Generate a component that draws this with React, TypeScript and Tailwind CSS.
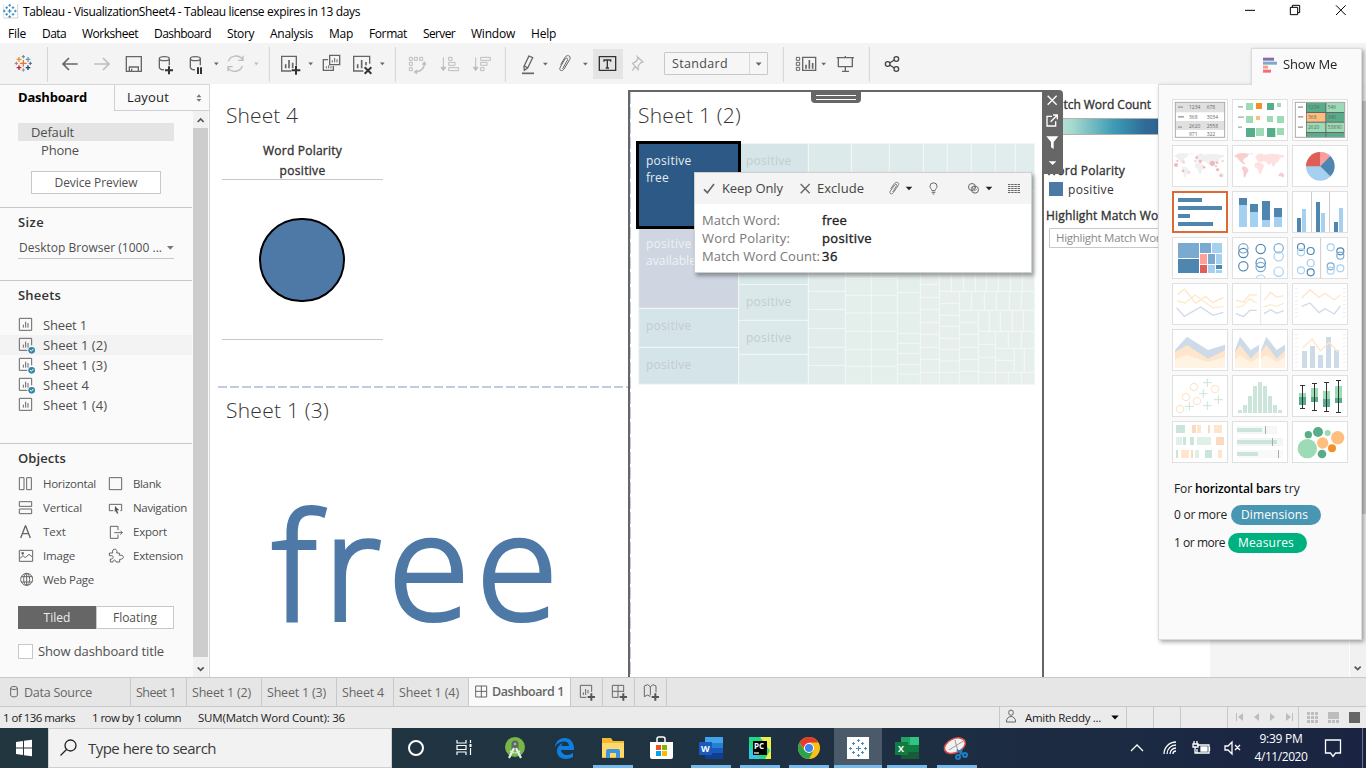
import { useLayoutEffect, useRef, type ReactNode } from "react";

/* A one-line label whose tracking is set so that it spans `w` pixels. */
function Fit({ w, className = "", children }: { w: number; className?: string; children: string }) {
  const ref = useRef<HTMLSpanElement>(null);
  useLayoutEffect(() => {
    const el = ref.current;
    if (!el) return;
    el.style.letterSpacing = "0px";
    const natural = el.getBoundingClientRect().width;
    el.style.letterSpacing = `${(w - natural) / children.length}px`;
  }, [w, children]);
  return (
    <span ref={ref} className={"inline-block shrink-0 whitespace-pre " + className}>
      {children}
    </span>
  );
}

/* Icon drawn on a grid of three units per pixel. */
function Ico({ vb, className = "", children }: { vb: string; className?: string; children?: ReactNode }) {
  const [, , w, h] = vb.split(" ").map(Number);
  return (
    <svg viewBox={vb} width={w / 3} height={h / 3} className={"block shrink-0 " + className} fill="none" stroke="#666" strokeWidth={4}>
      {children}
    </svg>
  );
}

const Caret = ({ x, y, c = "#666", s = 7 }: { x: number; y: number; c?: string; s?: number }) => (
  <path d={`M${x - s} ${y - s / 2}h${2 * s}l${-s} ${s + 1}z`} fill={c} stroke="none" />
);

const Plus = ({ x, y, s, c, w = 4 }: { x: number; y: number; s: number; c: string; w?: number }) => (
  <path d={`M${x - s} ${y}h${2 * s}M${x} ${y - s}v${2 * s}`} stroke={c} strokeWidth={w} />
);

const menus: [string, number][] = [
  ["File", 18], ["Data", 24], ["Worksheet", 56], ["Dashboard", 57], ["Story", 27], ["Analysis", 43],
  ["Map", 24], ["Format", 38], ["Server", 32], ["Window", 44], ["Help", 25],
];

function TitleBar() {
  return (
    <header className="h-[43px] bg-white text-[12px] text-black">
      <div className="flex h-[24px] items-center">
        <Ico vb="0 0 69 72">
          <path d="M10 54V14" stroke="#ccc" strokeWidth={2} />
          <path d="M12 54h41V12" stroke="#bbb" strokeWidth={2} />
          <Plus x={29} y={33} s={6} c="#2f7fb5" w={3} />
          {[[29, 16], [29, 50], [13, 33], [46, 33], [20, 23], [39, 23], [20, 43], [39, 43]].map(([x, y]) => (
            <Plus key={`${x}-${y}`} x={x} y={y} s={4} c="#3b8dc0" w={3} />
          ))}
        </Ico>
        <Fit w={337}>Tableau - VisualizationSheet4 - Tableau license expires in 13 days</Fit>
        <Ico vb="780 0 438 72" className="ml-auto">
          <path d="M855 31h30" stroke="#000" strokeWidth={3} />
          <path d="M991 22h22v22h-22zM997 22v-6h22v22h-6" stroke="#000" strokeWidth={3} />
          <path d="M1128 16l29 29M1157 16l-29 29" stroke="#000" strokeWidth={3} />
        </Ico>
      </div>
      <nav className="flex h-[19px] items-center gap-4 pl-2">
        {menus.map(([m, w]) => (
          <Fit key={m} w={w}>{m}</Fit>
        ))}
      </nav>
    </header>
  );
}

function Toolbar() {
  const lite = "#bdbdbd";
  return (
    <div className="flex h-[41px] bg-[#f4f4f4] pr-2">
      <Ico vb="0 129 144 123">
        <Plus x={70} y={190} s={10} c="#e8762b" />
        <Plus x={57} y={178} s={7} c="#e8912f" />
        <Plus x={84} y={178} s={7} c="#7099a6" />
        <Plus x={57} y={203} s={7} c="#c72035" />
        <Plus x={84} y={203} s={7} c="#1f447e" />
        <Plus x={70} y={170} s={5} c="#59879b" w={3} />
        <Plus x={70} y={210} s={5} c="#7099a6" w={3} />
        <Plus x={49} y={190} s={5} c="#c76a7c" w={3} />
        <Plus x={91} y={190} s={5} c="#5b6591" w={3} />
        <path d="M142.5 141v105" stroke="#d4d4d4" strokeWidth={3} />
      </Ico>
      <Ico vb="144 129 210 123">
        <path d="M233 192h-43M207 174l-18 18 18 18" strokeWidth={5} />
        <path d="M283 192h43M309 174l18 18-18 18" stroke={lite} strokeWidth={5} />
      </Ico>
      <Ico vb="354 129 456 123">
        <path d="M379 170h45v44h-45zM388 213v-12h27v12M395 213v-7" />
        <path d="M478 176c0-8 30-8 30 0v20M478 176c0 8 30 8 30 0M478 176v26c0 6 8 8 14 7" />
        <Plus x={507} y={211} s={12} c="#333" w={6} />
        <path d="M571 176c0-8 30-8 30 0v20M571 176c0 8 30 8 30 0M571 176v26c0 6 8 8 14 7" />
        <path d="M594 202v20M603 202v20" stroke="#333" strokeWidth={6} />
        <Caret x={649} y={191} />
        <path d="M685 184c6-18 32-22 42-6M727 198c-6 18-32 22-42 6M729 167v14h-14M684 214v-14h14" stroke={lite} />
        <Caret x={769} y={191} c={lite} />
        <path d="M808 141v105" stroke="#d4d4d4" strokeWidth={3} />
      </Ico>
      <Ico vb="810 129 378 123">
        <path d="M874 213h-29v-44h44v28" />
        <path d="M857 205v-12M867 205v-25M878 205v-17" strokeWidth={5} />
        <Plus x={888} y={211} s={13} c="#333" w={6} />
        <Caret x={932} y={191} />
        <path d="M989 166h30v28h-30zM984 179h-14v32h30v-13" />
        <path d="M997 187v-6M1004 187v-13M1011 187v-9M979 205v-6M986 205v-9M993 205v-6" strokeWidth={3} />
        <path d="M1090 213h-29v-44h48v22" />
        <path d="M1073 205v-12M1085 205v-25M1098 196v-10" strokeWidth={5} />
        <path d="M1094 202l20 19M1114 202l-20 19" stroke="#333" strokeWidth={6} />
        <Caret x={1147} y={191} />
        <path d="M1186 141v105" stroke="#d4d4d4" strokeWidth={3} />
      </Ico>
      <Ico vb="-12 -3 330 123">
        <g stroke={lite} strokeWidth={3}>
          <path d="M28 40h9v9h-9zM43 40h9v9h-9zM59 40h9v9h-9zM28 55h9v9h-9zM28 71h9v9h-9z" />
          <path d="M73 56c1 16-10 28-28 28M67 62l6-7 5 7M51 78l-7 6 7 5" strokeWidth={4} />
          <path d="M130 40v38M146 40h10v9h-10zM146 55h19v9h-19zM146 71h30v9h-30z" />
          <path d="M123 70h14l-7 10z" fill={lite} />
          <path d="M227 40v38M242 40h29v9h-29zM242 55h19v9h-19zM242 71h10v9h-10z" />
          <path d="M220 70h14l-7 10z" fill={lite} />
        </g>
        <path d="M316 9v105" stroke="#d4d4d4" strokeWidth={3} />
      </Ico>
      <Ico vb="318 -3 261 123">
        <path d="M387 36l11 5-15 31-10 7-1-12zM374 66l9 6" />
        <path d="M366 88h36" strokeWidth={5} />
        <Caret x={436} y={60} />
        <path d="M488 74l14-25c3-8-5-8-7-4l-14 24c-6 12 6 14 11 6l17-28c6-14-10-15-14-7l-13 22" strokeWidth={3} />
        <Caret x={556} y={60} />
      </Ico>
      <div className="mt-[6px] h-[30px] w-[30px] bg-[#e4e4e4]">
        <Ico vb="579 15 90 90">
          <path d="M598 38h49v41h-49z" stroke="#333" />
          <path d="M612 53v-5h20v5M622 48v24M617 72h10" stroke="#333" />
        </Ico>
      </div>
      <Ico vb="669 -3 123 123">
        <path d="M712 38l17 16-6 2-8 9-1 12-16-19 9-5 7-8zM706 66l-9 14" stroke={lite} />
      </Ico>
      <div className="mt-[9px] flex h-[23px] w-[104px] items-center rounded-[1px] border border-[#c8c8c8] bg-[#f6f6f6] pl-[7px] text-[12.5px] text-[#4a4a4a]">
        <Fit w={56} className="pt-px">Standard</Fit>
        <div className="ml-auto flex h-full w-[18px] items-center border-l border-[#d8d8d8]">
          <Ico vb="0 0 54 54"><Caret x={26} y={27} s={9} /></Ico>
        </div>
      </div>
      <Ico vb="1104 -3 456 123">
        <path d="M1150 9v105M1408 9v105" stroke="#d4d4d4" strokeWidth={3} />
        <path d="M1189 40h10v9h-10zM1189 55h10v9h-10zM1189 70h10v9h-10z" strokeWidth={3} />
        <path d="M1208 40h39v39h-39z" />
        <path d="M1218 74v-12M1228 74v-26M1238 74v-17" strokeWidth={5} />
        <Caret x={1271} y={60} />
        <path d="M1310 41h52M1315 43v25h42v-25M1336 36v5M1336 68v14M1326 82h21" />
        <g stroke="#444">
          <circle cx={1463} cy={60} r={7} /><circle cx={1489} cy={45} r={7} /><circle cx={1489} cy={75} r={7} />
          <path d="M1469 57l14-9M1469 63l14 9" />
        </g>
      </Ico>
    </div>
  );
}

const SheetIcon = ({ used }: { used: boolean }) => (
  <Ico vb="54 694 72 60">
    <path d={used ? "M82 740h-24v-36h37v21" : "M58 704h37v36h-37z"} strokeWidth={3} />
    <path d="M70 732v-9M77 732v-18M84 732v-14" strokeWidth={3} />
    {used && (
      <>
        <circle cx={95} cy={740} r={10} fill="#3485a8" stroke="none" />
        <path d="M90 739l4 4 6-7" stroke="#fff" strokeWidth={3} />
      </>
    )}
  </Ico>
);

const sheets: [string, number, boolean][] = [
  ["Sheet 1", 44, false], ["Sheet 1 (2)", 64, true], ["Sheet 1 (3)", 64, true], ["Sheet 4", 46, true], ["Sheet 1 (4)", 64, false],
];

const objects: [string, number, string, ReactNode][] = [
  ["Horizontal", 53, "54 186 72 72", <path d="M58 203h14v36h-14zM80 203h14v36h-14z" strokeWidth={3} />],
  ["Blank", 28, "324 186 72 72", <path d="M328 203h37v36h-37z" strokeWidth={3} />],
  ["Vertical", 39, "54 258 72 72", <path d="M58 275h37v14h-37zM58 297h37v14h-37z" strokeWidth={3} />],
  ["Navigation", 54, "324 258 72 72", <><path d="M340 302h-12v-19h37v19h-4" strokeWidth={3} /><path d="M345 288l13 13-7 0 4 9-4 1-4-8-3 4z" fill="#555" stroke="none" /></>],
  ["Text", 23, "54 330 72 72", <path d="M62 384l14-36h1l14 36M67 371h19" />],
  ["Export", 34, "324 330 72 72", <path d="M354 360v-11h-23v36h23v-11M343 368h24M361 362l6 6-6 6" strokeWidth={3} />],
  ["Image", 32, "54 402 72 72", <><path d="M58 421h40v33h-40zM60 445l9-8 7 6 11-10 10 8" strokeWidth={3} /><circle cx={68} cy={430} r={2} /></>],
  ["Extension", 50, "324 402 72 72", <path d="M331 456v-9c10 2 12-11 2-10h-5v-8h10c-5-15 17-16 12 0h8v7c15-4 17 13 1 12v8h-11c-1-8-9-8-9 0z" strokeWidth={3} />],
  ["Web Page", 51, "54 474 72 72", <><circle cx={80} cy={508} r={18} strokeWidth={3} /><ellipse cx={80} cy={508} rx={9} ry={18} strokeWidth={3} /><path d="M80 490v36M63 500h34M63 516h34" strokeWidth={3} /></>],
];

function SidePanel() {
  return (
    <aside className="flex w-[210px] shrink-0 flex-col border-r border-[#d6d6d6] bg-[#fafafa] text-[#4f4f4f]">
      <div className="flex h-[27px] border-t border-[#d6d6d6]">
        <div className="flex w-[114px] items-center pl-[18px] text-[13px] font-bold text-black"><Fit w={69}>Dashboard</Fit></div>
        <div className="flex flex-1 items-center border-b border-l border-[#d0d0d0] pl-3 text-[13px] text-[#222]">
          <Fit w={42} className="pt-px">Layout</Fit>
          <Ico vb="584 24 24 30" className="ml-[26px]">
            <path d="M588 37h15l-7-9zM588 42h15l-7 8z" fill="#777" stroke="none" />
          </Ico>
        </div>
      </div>
      <div className="flex min-h-0 flex-1">
        <div className="w-[193px] shrink-0 pr-px">
          <div className="h-[97px] border-b border-[#c8c8c8] pt-3 text-[13px]">
            <div className="ml-[18px] flex h-[18px] w-[156px] items-center bg-[#e4e4e4] pl-[13px]"><Fit w={43} className="pt-[2px]">Default</Fit></div>
            <div className="ml-[41px] flex h-[18px] items-center"><Fit w={38} className="pt-[2px]">Phone</Fit></div>
            <div className="mt-[12px] ml-[31px] flex h-[23px] w-[130px] items-center justify-center border border-[#c8c8c8] bg-white text-[12px]"><Fit w={83}>Device Preview</Fit></div>
          </div>
          <div className="h-[73px] border-b border-[#c8c8c8] pt-[5px] pl-[18px]">
            <div className="flex h-5 items-center text-[13px] font-semibold text-[#333]"><Fit w={26}>Size</Fit></div>
            <div className="mt-[4px] flex h-[22px] w-[156px] items-center border-b border-[#c8c8c8] pl-px text-[12px]">
              <Fit w={143}>Desktop Browser (1000 ...</Fit>
              <Ico vb="0 0 36 24" className="ml-[2px]"><Caret x={19} y={11} s={10} c="#777" /></Ico>
            </div>
          </div>
          <div className="h-[163px] border-b border-[#c8c8c8] pt-[5px]">
            <div className="flex h-5 items-center pl-[18px] text-[13px] font-semibold text-[#333]"><Fit w={43}>Sheets</Fit></div>
            <div className="mt-[9px]">
              {sheets.map(([name, w, used], i) => (
                <div key={name} className={"flex h-5 items-center pl-[18px] text-[13px] " + (i === 1 ? "bg-[#f3f3f3]" : "")}>
                  <SheetIcon used={used} />
                  <Fit w={w} className="ml-px pt-[2px]">{name}</Fit>
                </div>
              ))}
            </div>
          </div>
          <div className="pt-[4px] pl-[18px]">
            <div className="flex h-5 items-center text-[13px] font-semibold text-[#333]"><Fit w={48} className="pt-[2px]">Objects</Fit></div>
            <div className="mt-[4px] grid grid-cols-[90px_84px] text-[11.5px]">
              {objects.map(([name, w, vb, art]) => (
                <div key={name} className="flex h-6 items-center">
                  <Ico vb={vb}>{art}</Ico>
                  <Fit w={w} className="ml-px">{name}</Fit>
                </div>
              ))}
            </div>
            <div className="mt-[14px] flex h-[23px] w-[156px] text-[12px]">
              <div className="flex w-[78px] items-center justify-center bg-[#666] text-[#eee]"><Fit w={27}>Tiled</Fit></div>
              <div className="flex flex-1 items-center justify-center border border-[#c8c8c8] bg-white"><Fit w={44}>Floating</Fit></div>
            </div>
            <div className="mt-[13px] flex h-[18px] items-center text-[13px]">
              <span className="mr-[5px] h-[15px] w-[15px] border border-[#c8c8c8] bg-white" />
              <Fit w={126} className="pt-[2px]">Show dashboard title</Fit>
            </div>
          </div>
        </div>
        <div className="flex w-[15px] flex-col bg-[#f1f1f1]">
          <Ico vb="579 81 45 51"><path d="M593 114l9-9 9 9" stroke="#555" strokeWidth={5} /></Ico>
          <div className="flex-1 bg-[#cdcdcd]" />
          <Ico vb="579 741 45 60"><path d="M593 772l9 9 9-9" stroke="#555" strokeWidth={5} /></Ico>
        </div>
      </div>
    </aside>
  );
}

const cells: [number, number, number, number, string][] = [
  [25, 432, 301, 241, "#cfd6e1"], [25, 673, 301, 117, "#d5e4e9"], [25, 790, 301, 111, "#d5e4e8"],
  [326, 178, 209, 211, "#d6e6e8"], [326, 389, 209, 212, "#d8e7e9"], [326, 601, 209, 108, "#dae8e9"],
  [326, 709, 209, 102, "#dce9ea"], [326, 811, 209, 90, "#ddeaeb"],
  [535, 178, 129, 140, "#ddeaea"], [664, 178, 216, 140, "#dfebeb"], [880, 178, 334, 140, "#e1ecec"],
  [535, 318, 111, 583, "#e1eceb"], [646, 318, 225, 583, "#e4eeeb"], [871, 318, 343, 583, "#e7efed"],
];

function Treemap() {
  return (
    <svg viewBox="0 144 1260 786" width={412} height={262} preserveAspectRatio="xMinYMin slice" className="block">
      {cells.map(([x, y, w, h, f]) => <rect key={`${x}-${y}`} x={x} y={y} width={w} height={h} fill={f} />)}
      <path
        fill="none" stroke="#f4f7f7" strokeWidth={3}
        d="M26 178H1214V901H26zM26 673H326M26 790H326M326 178V901M535 178V901M326 288H535M326 389H535M326 495H535M326 601H535M326 709H535M326 811H535
        M664 178V318M778 178V318M880 178V318M952 178V318M1024 178V318M1096 178V318M1156 178V318M535 322H1214M1156 420H1214M1096 507H1214
        M646 322V901M724 322V901M802 322V901M871 322V901M928 322V901M535 622H646M535 676H646M535 733H646M535 790H646M535 844H646
        M646 583H802M646 634H802M646 687H871M646 742H802M646 796H802M646 847H802M802 625H871M802 748H871M802 778H871M802 808H871M802 842H871M802 870H871
        M871 601H928M871 640H928M871 676H928M871 715H928M871 751H928M871 790H928M871 826H928M871 865H928
        M928 622H1214M964 507V622M1000 507V622M1036 507V622M1069 507V622M1105 507V622M1141 507V622M1177 507V622
        M928 658H988M928 694H988M928 727H988M928 763H988M928 796H988M928 831H988M928 865H988M988 622V901M988 679H1214M1024 622V679M1063 622V679M1099 622V679M1138 622V679M1174 622V679
        M1045 679V901M1078 679V742M1111 679V742M1147 679V742M1180 679V742M1045 742H1214M988 715H1045M988 751H1045M988 790H1045M988 826H1045M988 862H1045
        M1096 742V901M1045 781H1096M1045 820H1096M1045 865H1214M1135 742V793M1174 742V793M1096 793H1214M1153 793V865M1183 793V865M1096 829H1153M1135 865V901M1174 865V901"
      />
      <rect x={22.5} y={175.5} width={306} height={255} fill="#2c5985" stroke="#000" strokeWidth={9} />
      <g fontSize={36} className="[font-family:'Open_Sans',sans-serif]" fill="#c3cccf">
        <g fill="#e6ecf2">
          <text x={48} y={243} textLength={136}>positive</text>
          <text x={48} y={293} textLength={68}>free</text>
        </g>
        <g fill="#eef0f4">
          <text x={48} y={492} textLength={136}>positive</text>
          <text x={48} y={542} textLength={150}>available</text>
        </g>
        <text x={348} y={243} textLength={136}>positive</text>
        <text x={348} y={666} textLength={136}>positive</text>
        <text x={348} y={774} textLength={136}>positive</text>
        <text x={48} y={738} textLength={136}>positive</text>
        <text x={48} y={855} textLength={136}>positive</text>
      </g>
    </svg>
  );
}

function MarkTooltip() {
  const rows: [string, number, string, number][] = [
    ["Match Word:", 78, "free", 25], ["Word Polarity:", 88, "positive", 50], ["Match Word Count:", 118, "36", 16],
  ];
  return (
    <div className="absolute top-[80px] left-[64px] z-20 h-[101px] w-[338px] border border-[#d0d0d0] bg-white text-[13px] text-[#444] shadow-[2px_3px_4px_rgba(0,0,0,0.35)]">
      <div className="flex h-[31px] items-center bg-[#f4f4f4]">
        <Ico vb="195 265 81 93"><path d="M222 314l10 10 20-26" strokeWidth={5} /></Ico>
        <Fit w={61}>Keep Only</Fit>
        <Ico vb="459 265 102 93"><path d="M512 298l27 28M539 298l-27 28" strokeWidth={4} /></Ico>
        <Fit w={47}>Exclude</Fit>
        <Ico vb="702 265 480 93">
          <path d="M788 322l12-19c2-5-4-6-6-2l-13 18c-5 9 5 11 9 5l15-22c5-10-8-12-12-5l-11 16" strokeWidth={2.5} />
          <Caret x={837} y={311} s={10} c="#222" />
          <path d="M906 318c-1-5-6-7-6-13a10.500 10.500 0 0 1 21 0c0 6-5 8-6 13zM905 323h11M908 328h5" strokeWidth={3} />
          <circle cx={1026} cy={307} r={10.500} strokeWidth={3} /><circle cx={1035} cy={315} r={10.500} strokeWidth={3} />
          <path d="M1022 309l9-5M1026 314l12-6M1031 319l10-5" strokeWidth={2} />
          <Caret x={1077} y={311} s={10} c="#222" />
          <path d="M1134 299.500h36M1134 305.500h36M1134 311.500h36M1134 317.500h36M1134 323.500h36" strokeWidth={3} strokeDasharray="7.500 2" />
        </Ico>
      </div>
      <div className="pt-[7px] pl-[7px]">
        {rows.map(([k, kw, v, vw]) => (
          <div key={k} className="flex h-[18px] items-center">
            <div className="w-[120px] text-[#787878]"><Fit w={kw} className="pt-[2px] align-top">{k}</Fit></div>
            <Fit w={vw} className="pt-[2px] text-[#222] [-webkit-text-stroke:0.35px_#222]">{v}</Fit>
          </div>
        ))}
      </div>
    </div>
  );
}

const titleCls = "text-[21px] leading-[28px] font-light text-[#333]";

function Canvas() {
  return (
    <main className="flex min-w-0 flex-1 bg-white">
      <section className="w-[418px] shrink-0 pt-[17px] pl-2">
        <div className="h-[285px]">
          <div className="h-[28px] pl-2"><Fit w={72} className={titleCls}>Sheet 4</Fit></div>
          <div className="ml-1 w-[161px] border-b border-[#c8c8c8] pt-[11px] text-center text-[12px] leading-5 text-[#333] [-webkit-text-stroke:0.35px_#333]">
            <div className="h-5"><Fit w={79} className="pt-px">Word Polarity</Fit></div>
            <div className="h-[19px]"><Fit w={46} className="pt-px">positive</Fit></div>
          </div>
          <div className="ml-1 flex h-[160px] w-[161px] items-center justify-center border-b border-[#c8c8c8] pr-px">
            <div className="h-[84px] w-[86px] rounded-full border-2 border-black bg-[#4e79a7]" />
          </div>
        </div>
        <svg className="block" width={410} height={2}><path d="M0 1h410" stroke="#c0cbe2" strokeWidth={2} strokeDasharray="9 3" /></svg>
        <div className="h-[36px] pt-[8px] pl-2"><Fit w={103} className={titleCls}>Sheet 1 (3)</Fit></div>
        <div className="pt-[36px] pl-[54px] text-[148px] leading-[205px] text-[#4e79a7]"><Fit w={293} className="font-light [-webkit-text-stroke:4px_#4e79a7]">free</Fit></div>
      </section>
      <section className="relative mt-[6px] w-[416px] shrink-0 border-x-2 border-t-2 border-[#666]">
        <svg className="absolute top-0 left-0" width={1} height={585}><path d="M.5 0v585" stroke="#c0cbe2" strokeDasharray="12 3" /></svg>
        <div className="absolute top-0 left-[181px] flex h-[11px] w-[50px] flex-col items-center gap-[3px] rounded-b-sm bg-[#666] pt-[3px]">
          <span className="h-px w-10 bg-white" />
          <span className="h-px w-10 bg-white" />
        </div>
        <div className="h-[40px] pt-[9px] pl-2"><Fit w={103} className={titleCls}>Sheet 1 (2)</Fit></div>
        <Treemap />
        <MarkTooltip />
        <div className="absolute -top-[2px] -right-[21px] z-10 h-[84px] w-[21px] rounded-tr-sm bg-[#666]">
          <Ico vb="36 18 63 252">
            <path d="M53 35l27 27M80 35l-27 27" stroke="#fff" />
            <path d="M66 97h-15v29h26v-14M69 93h13v13M82 93l-20 20" stroke="#fff" />
            <path d="M49 157h36l-14 17v21l-8-5v-16z" fill="#fff" stroke="none" />
            <path d="M56 232h23l-11 11z" fill="#fff" stroke="none" />
          </Ico>
        </div>
      </section>
      <section className="w-[166px] shrink-0 pt-[11px] pl-[2px] text-[12px] text-[#333]">
        <div className="flex h-5 items-center [-webkit-text-stroke:0.35px_#333]"><Fit w={105}>Match Word Count</Fit></div>
        <div className="mt-[3px] ml-px h-[17px] w-[160px] border border-[#b5b0a8] bg-[linear-gradient(to_right,#c9e9dd_0px,#a6d9cf_24px,#3d9bb5_66px,#2f6b98_97px,#2a5783_140px)]" />
        <div className="mt-[25px] flex h-5 items-center [-webkit-text-stroke:0.35px_#333]"><Fit w={79} className="pt-px">Word Polarity</Fit></div>
        <div className="ml-[3px] flex h-[18px] items-center gap-[5px]">
          <span className="h-[14px] w-[14px] bg-[#4e79a7]" />
          <Fit w={46} className="pt-[2px]">positive</Fit>
        </div>
        <div className="mt-[8px] flex h-5 items-center [-webkit-text-stroke:0.35px_#333]"><Fit w={125}>Highlight Match Word</Fit></div>
        <div className="mt-[2px] ml-[3px] flex h-5 w-[140px] items-center rounded-[1px] border border-[#c8c8c8] pl-[6px] text-[11.5px] text-[#8a8a8a]"><Fit w={111}>Highlight Match Word</Fit></div>
      </section>
      <div className="flex flex-1 bg-[#f4f4f4]">
        <div className="ml-auto flex w-[17px] flex-col border-l border-white bg-[#f1f1f1]">
          <div className="mt-[17px] h-[413px] bg-[#cdcdcd]" />
          <Ico vb="0 0 48 60" className="mt-auto"><path d="M14 29l9 9 9-9" stroke="#555" strokeWidth={5} /></Ico>
        </div>
      </div>
    </main>
  );
}

const america = "M42 198l14-8 18-1 14 3-6 8-10 6-3 8 8 8-6 1-10-8-8-10zM68 229l12 3 6 9-6 10-5 12-4-2-1-16-5-10z";
const australia = "M176 252l10-5 7 8-3 8-8-4-7 0z";
const eurasia = "M90 190l10-1-4 6zM106 200l8-8 10-2 8 4 18-3 22 2 22 3-4 6-10 2-6 12-8 4-4 10-5-2-3-10-8 8-6-9-10-3-8 2-8-1-4-6zM106 218l12-1 10 5 5 6-6 10-3 12-6 2-5-16-10-6z";
const o1 = "#ffe5cc", y1 = "#fdeccb", b1 = "#cddbe9", g1 = "#cbe5da";
const dk = "#4f86b0", lt = "#a5d0f0", md = "#7baad0";
const gd = "#56ad89", gl = "#9cdbb5", or = "#f58f2a", ol = "#ffbe7d";

type Rect = [number, number, number, number, string];
const Rects = ({ r }: { r: Rect[] }) => <>{r.map(([x, y, w, h, f], i) => <rect key={i} x={x} y={y} width={w} height={h} fill={f} stroke="none" />)}</>;
type Circ = [number, number, number, string];
const Rings = ({ c, r: rr }: { c: Circ[]; r?: number }) => <>{c.map(([x, y, r, s], i) => <circle key={i} cx={x} cy={y} r={rr ?? r} stroke={s} strokeWidth={3.5} />)}</>;
const Dots = ({ c }: { c: Circ[] }) => <>{c.map(([x, y, r, s], i) => <circle key={i} cx={x} cy={y} r={r} fill={s} stroke="none" />)}</>;
const Num = ({ t }: { t: [number, number, string][] }) => (
  <g fontSize={17} fill="#666" stroke="none" className="[font-family:'Open_Sans',sans-serif]">
    {t.map(([x, y, s]) => <text key={s} x={x} y={y} textLength={s.length * 8.500} lengthAdjust="spacingAndGlyphs">{s}</text>)}
  </g>
);

const thumbs: [string, ReactNode][] = [
  ["36 27", <>
    <Rects r={[[46, 37, 148, 30, "#e0e0e0"], [46, 93, 148, 27, "#e0e0e0"], [54, 49, 15, 5, "#aaa"], [54, 78, 18, 5, "#aaa"], [54, 109, 12, 5, "#aaa"]]} />
    <rect x={46} y={37} width={148} height={105} stroke="#aaa" strokeWidth={3} />
    <Num t={[[87, 58, "1234"], [140, 58, "678"], [87, 86, "368"], [140, 86, "3034"], [87, 113, "2620"], [140, 113, "2558"], [87, 137, "971"], [140, 137, "322"]]} />
  </>],
  ["216 27", <Rects r={[[234, 48, 15, 5, "#bbb"], [234, 79, 18, 5, "#bbb"], [234, 109, 12, 5, "#bbb"], [258, 39, 21, 21, gl], [288, 39, 18, 18, or], [321, 39, 21, 21, gd], [351, 39, 12, 12, gl], [258, 78, 21, 21, gl], [288, 78, 12, 12, ol], [321, 78, 18, 18, gl], [351, 78, 21, 21, gl], [258, 114, 27, 27, gd], [288, 114, 24, 24, gl], [321, 114, 25, 27, gd], [351, 114, 21, 21, gl]]} />],
  ["396 27", <>
    <Rects r={[[438, 37, 116, 105, "#666"], [440, 38, 56, 28, gd], [499, 38, 54, 28, gl], [440, 69, 56, 26, ol], [499, 69, 54, 26, gd], [440, 98, 56, 28, gl], [499, 98, 54, 28, gl], [440, 129, 56, 12, gd], [499, 129, 54, 12, gd], [414, 49, 15, 5, "#aaa"], [414, 78, 16, 5, "#aaa"], [414, 109, 15, 5, "#aaa"]]} />
    <rect x={406} y={37} width={148} height={105} stroke="#aaa" strokeWidth={3} />
    <Num t={[[444, 57, "1234"], [503, 57, "546"], [444, 88, "368"], [503, 88, "340"], [444, 118, "2620"], [503, 118, "53890"]]} />
  </>],
  ["36 165", <>
    <path d={america + eurasia + australia} fill="#f0f0f0" stroke="none" />
    <Dots c={[[48, 225, 6, "#efb9bf"], [52, 213, 3, "#efb9bf"], [70, 215, 5, "#f9d6d8"], [69, 243, 4, "#efb9bf"], [86, 247, 5, "#f9d6d8"], [110, 203, 4, "#efb9bf"], [106, 213, 4, "#f9d6d8"], [121, 214, 5, "#efb9bf"], [132, 232, 4, "#efb9bf"], [157, 220, 8, "#efb9bf"], [171, 218, 4, "#efb9bf"], [168, 229, 3, "#efb9bf"], [173, 239, 5, "#efb9bf"], [183, 257, 4, "#efb9bf"], [188, 213, 4, "#f9d6d8"]]} />
  </>],
  ["216 165", <g stroke="none" transform="translate(180 0)"><path d={eurasia} fill="#ffe0e0" /><path d={america + australia} fill="#f8cfcf" /></g>],
  ["396 165", <g stroke="none"><circle cx={481} cy={229} r={43} fill={lt} /><path d="M481 229v-43a43 43 0 0 0-43 43z" fill="#e15e57" /><path d="M481 229v-43a43 43 0 0 1 30 12z" fill="#ff9d9a" /><path d="M481 229l30-31a43 43 0 0 1 0 61z" fill={dk} /></g>],
  ["36 303", <Rects r={[[54, 324, 72, 12, dk], [54, 348, 132, 12, dk], [54, 372, 36, 12, dk], [54, 396, 105, 12, dk]]} />],
  ["216 303", <Rects r={[[237, 324, 24, 21, dk], [237, 345, 24, 66, lt], [270, 342, 24, 24, dk], [270, 366, 24, 45, lt], [306, 333, 24, 57, dk], [306, 390, 24, 21, lt], [342, 354, 24, 27, dk], [342, 381, 24, 30, lt]]} />],
  ["396 303", <Rects r={[[453, 306, 3, 120, "#ccc"], [507, 306, 3, 120, "#ccc"], [411, 384, 12, 42, dk], [426, 357, 12, 69, lt], [468, 336, 12, 90, dk], [483, 369, 12, 57, lt], [522, 396, 12, 30, dk], [537, 354, 12, 72, lt]]} />],
  ["36 441", <Rects r={[[54, 459, 63, 45, md], [54, 507, 63, 42, dk], [120, 459, 33, 30, md], [156, 459, 30, 30, lt], [120, 492, 21, 30, "#ffa09a"], [144, 492, 21, 30, md], [168, 492, 18, 30, lt], [120, 525, 21, 24, "#e15e57"], [144, 525, 21, 24, lt], [168, 525, 18, 12, dk], [168, 540, 18, 9, lt]]} />],
  ["216 441", <Rings c={[[250, 475, 14, md], [250, 489, 14, dk], [250, 529, 14, dk], [302, 477, 14, dk], [302, 518, 14, dk], [302, 531, 14, md], [302, 569, 14, lt], [356, 475, 14, md], [356, 499, 14, lt], [356, 545, 14, lt]]} />],
  ["396 441", <><path d="M482 444v120" stroke="#ccc" strokeWidth={3} /><Rings r={10.500} c={[[423, 471, 0, dk], [423, 487, 0, lt], [452, 483, 0, dk], [452, 519, 0, lt], [423, 541, 0, lt], [452, 547, 0, dk], [512, 472, 0, lt], [541, 484, 0, dk], [541, 497, 0, md], [512, 529, 0, md], [512, 542, 0, lt], [541, 535, 0, lt]]} /></>],
  ["36 21", <><path d="M53 56l20-17 34 43 30-21 21 19 32-16" stroke={o1} /><path d="M51 75l24 6 30-24 54 39 31-5" stroke={y1} /><path d="M50 96l23 25 49-28 37 25 31-9" stroke={b1} /></>],
  ["216 21", <><path d="M302 24v120" stroke="#e6e6e6" strokeWidth={3} /><path d="M228 73l23 5 18-22 21 2M312 73l20-24 18 15 21-5" stroke={o1} /><path d="M228 94l20-4 21-22 21 13M310 93l22-7 18 5 21-9" stroke={y1} /><path d="M228 113l23 9 18-19 21 0M312 113l20-12 18 11 21-8" stroke={b1} /></>],
  ["396 21", <><path d="M425 66l25-25 27 23 18-12 28 20 18-16" stroke={o1} /><path d="M425 91l25-10 27 29 18-12 28 16 18-24" stroke={b1} /><path d="M409 37v94M553 37v94" stroke="#eee" strokeWidth={9} strokeDasharray="3 9" /></>],
  ["36 159", <g stroke="none"><path d="M45 222l36-40 63 40 51-16v70H45z" fill={b1} /><path d="M45 228l36-21 63 41 51-25v53H45z" fill={o1} /><path d="M45 249l36-12 63 21 51-15v33H45z" fill="#fff3e3" /></g>],
  ["216 159", <g stroke="none"><path d="M225 222l15-40 32 40 25-16v70h-72z" fill={b1} /><path d="M225 228l15-21 32 41 25-25v53h-72z" fill={o1} /><path d="M225 249l15-12 32 21 25-15v33h-72z" fill="#fff3e3" /><path d="M303 222l16-40 31 40 25-16v70h-72z" fill={b1} /><path d="M303 228l16-21 31 41 25-25v53h-72z" fill={o1} /><path d="M303 249l16-12 31 21 25-15v33h-72z" fill="#fff3e3" /></g>],
  ["396 159", <><Rects r={[[426, 225, 15, 51, b1], [450, 210, 15, 66, b1], [474, 237, 15, 39, b1], [498, 183, 15, 93, b1], [522, 222, 15, 54, b1]]} /><path d="M429 215l27-26 25 36 26-26 27 28" stroke={o1} /><path d="M409 175v102M553 175v102" stroke="#eee" strokeWidth={9} strokeDasharray="3 9" /></>],
  ["36 297", <><Rings c={[[102, 333, 11, o1], [165, 339, 11, o1], [78, 363, 11, o1], [111, 375, 11, o1], [60, 399, 11, o1]]} />{[[142, 320], [130, 353], [175, 371], [88, 391], [142, 389]].map(([x, y]) => <Plus key={x * y} x={x} y={y} s={13} c={g1} w={3} />)}</>],
  ["216 297", <Rects r={[[234, 402, 12, 9, g1], [249, 387, 12, 24, g1], [264, 360, 12, 51, g1], [279, 330, 12, 81, g1], [294, 318, 12, 93, g1], [309, 330, 12, 81, g1], [324, 360, 12, 51, g1], [339, 387, 12, 24, g1], [354, 402, 12, 9, g1]]} />],
  ["396 297", <><Rects r={[[417, 351, 21, 12, gl], [417, 363, 21, 24, gd], [453, 336, 21, 27, gl], [453, 363, 21, 15, gd], [489, 345, 21, 24, gl], [489, 369, 21, 24, gd], [525, 330, 21, 36, gl], [525, 366, 21, 15, gd]]} /><path d="M427.500 328v69M420 328.500h15M420 397.500h15M463.500 322v81M456 322.500h15M456 403.500h15M499.500 319v87M492 319.500h15M492 406.500h15M535.500 313v96M528 313.500h15M528 409.500h15" stroke="#333" strokeWidth={3} /></>],
  ["36 435", <Rects r={[[48, 447, 27, 24, g1], [96, 447, 12, 24, "#fbdac0"], [111, 447, 12, 24, o1], [144, 447, 6, 24, "#fbdac0"], [162, 447, 24, 24, o1], [48, 483, 18, 24, "#def0e8"], [69, 483, 9, 24, g1], [90, 483, 12, 24, g1], [111, 483, 42, 24, "#def0e8"], [168, 483, 24, 24, "#fbdac0"], [48, 522, 6, 24, g1], [63, 522, 24, 24, o1], [93, 522, 6, 24, "#fbdac0"], [105, 522, 12, 24, "#def0e8"], [135, 522, 21, 24, g1], [174, 522, 12, 24, o1]]} />],
  ["216 435", <Rects r={[[231, 450, 120, 24, "#f6f7f7"], [231, 486, 138, 24, "#f4f6f6"], [231, 522, 138, 24, "#f8f9f9"], [231, 456, 75, 12, g1], [231, 492, 120, 12, g1], [231, 528, 63, 12, g1], [315, 450, 3, 24, "#aaa"], [336, 486, 3, 24, "#aaa"], [354, 522, 3, 24, "#aaa"]]} />],
  ["396 435", <Dots c={[[442, 518, 29, gl], [445, 476, 11, gd], [474, 468, 15, gd], [503, 471, 9, gl], [533, 485, 20, ol], [488, 501, 17, ol], [516, 517, 12, or], [486, 534, 13, gd]]} />],
];

function ShowMe() {
  return (
    <div className="absolute top-[48px] left-[1158px] z-30 flex w-[204px] flex-col drop-shadow-[2px_2px_2px_rgba(0,0,0,0.35)]">
      <div className="relative z-10 -mb-px ml-auto flex h-[37px] w-[111px] items-center border border-b-0 border-[#dcdcdc] bg-[#fafafa] pb-[5px] pl-[11px] text-[13px] text-[#222]">
        <Ico vb="339 166 60 48">
          <Rects r={[[339, 168, 33, 9, "#8470a0"], [339, 180, 42, 9, "#7fa6d0"], [339, 192, 15, 9, "#f2a27c"], [339, 204, 24, 9, "#f76b7f"]]} />
        </Ico>
        <Fit w={54}>Show Me</Fit>
      </div>
      <div className="h-[556px] border border-[#dcdcdc] bg-[#fafafa] pt-[14px] pl-[13px] text-[12px] text-[#222]">
        <div className="grid grid-cols-[56px_56px_56px] gap-x-1 gap-y-1">
          {thumbs.map(([o, art], i) => (
            <div key={i} className="h-[42px] w-[56px] overflow-hidden bg-white">
              <Ico vb={`${o} 168 126`}>
                {art}
                <rect
                  x={Number(o.split(" ")[0]) + (i === 6 ? 3 : 1.5)}
                  y={Number(o.split(" ")[1]) + (i === 6 ? 3 : 1.5)}
                  width={i === 6 ? 162 : 165}
                  height={i === 6 ? 120 : 123}
                  stroke={i === 6 ? "#dc6a35" : "#e0e0e0"}
                  strokeWidth={i === 6 ? 6 : 3}
                />
              </Ico>
            </div>
          ))}
        </div>
        <div className="mt-4 ml-[2px]">
          <div className="flex h-5 items-center">
            <Fit w={21}>For </Fit><Fit w={86} className="font-semibold text-black">horizontal bars</Fit><Fit w={19}> try</Fit>
          </div>
          <div className="mt-[6px] flex h-5 items-center gap-[4px]">
            <Fit w={53}>0 or more</Fit>
            <span className="flex h-5 w-[90px] items-center rounded-full bg-[#4996b2] pl-[10px] text-white"><Fit w={67}>Dimensions</Fit></span>
          </div>
          <div className="mt-2 flex h-5 items-center gap-[3px]">
            <Fit w={51}>1 or more</Fit>
            <span className="flex h-5 w-[79px] items-center rounded-full bg-[#00b180] pl-[10px] text-white"><Fit w={56}>Measures</Fit></span>
          </div>
        </div>
      </div>
    </div>
  );
}

const tabs: [string, number, number][] = [["Sheet 1", 56, 40], ["Sheet 1 (2)", 75, 59], ["Sheet 1 (3)", 75, 59], ["Sheet 4", 57, 42], ["Sheet 1 (4)", 75, 60]];

function SheetTabs() {
  return (
    <div className="flex h-[30px] border-y border-[#c8c8c8] bg-[#e6e6e6] text-[12.5px] text-[#666]">
      <div className="flex w-[131px] items-center border-r border-[#c8c8c8]">
        <Ico vb="0 0 72 84"><path d="M32 30c0-6 20-6 20 0v22c0 6-20 6-20 0zM32 30c0 6 20 6 20 0" strokeWidth={3} /></Ico>
        <Fit w={68} className="pt-[2px]">Data Source</Fit>
      </div>
      {tabs.map(([t, w, tw], i) => (
        <div key={i} className="flex items-center border-r border-[#c8c8c8] pl-[5px]" style={{ width: w }}><Fit w={tw} className="pt-[2px]">{t}</Fit></div>
      ))}
      <div className="flex w-[102px] items-center border-r border-[#c8c8c8] bg-[#fafafa] font-semibold">
        <Ico vb="0 0 69 84"><path d="M20 24h33v33h-33zM37 24v33M20 40h33" strokeWidth={3} /></Ico>
        <Fit w={72}>Dashboard 1</Fit>
      </div>
      <div className="flex w-8 border-r border-[#c8c8c8]"><Ico vb="0 0 93 84"><path d="M46 58h-18v-36h34v20M37 51v-8M44 51v-18M51 46v-10" strokeWidth={3} /><Plus x={61} y={57} s={11} c="#555" w={6} /></Ico></div>
      <div className="flex w-8 border-r border-[#c8c8c8]"><Ico vb="0 0 93 84"><path d="M46 58h-18v-36h34v20M45 22v36M28 40h34" strokeWidth={3} /><Plus x={61} y={57} s={11} c="#555" w={6} /></Ico></div>
      <div className="flex w-8 border-r border-[#c8c8c8]"><Ico vb="0 0 93 84"><path d="M46 56l-8-5-10 5v-32l10-4 8 6 8-6 9 4v19M46 26v26" strokeWidth={3} /><Plus x={61} y={57} s={11} c="#555" w={6} /></Ico></div>
    </div>
  );
}

function StatusBar() {
  return (
    <div className="flex h-[21px] items-center bg-[#ebebeb] pl-[3px] text-[11.5px] text-[#222]">
      <div className="flex gap-[17px]">
        <Fit w={72} className="pt-px">1 of 136 marks</Fit>
        <Fit w={89} className="pt-px">1 row by 1 column</Fit>
        <Fit w={147} className="pt-px">SUM(Match Word Count): 36</Fit>
      </div>
      <div className="ml-auto flex h-full w-[127px] items-center border-l border-[#c8c8c8]">
        <Ico vb="0 0 75 63"><ellipse cx={33} cy={17} rx={7} ry={8} strokeWidth={3} /><path d="M19 45c0-22 28-22 28 0z" strokeWidth={3} /></Ico>
        <Fit w={76} className="pt-px">Amith Reddy ...</Fit>
        <Ico vb="0 0 72 63"><Caret x={42} y={31} s={11} c="#000" /></Ico>
      </div>
      <div className="h-full w-[27px] border-l border-[#c8c8c8]" />
      <div className="h-full w-[27px] border-l border-[#c8c8c8]" />
      <div className="h-full w-[47px] border-l border-[#c8c8c8]" />
      <svg width={71} height={21} className="block border-l border-[#c8c8c8]" fill="#bdbdbd">
        <path d="M8 6h1v8h-1zM15 6v8l-5-4zM31 6v8l-5-4zM42 6v8l5-4zM58 6v8l5-4zM64 6h1v8h-1z" />
      </svg>
      <svg width={68} height={21} className="block border-l border-[#c8c8c8]" fill="#bdbdbd">
        <path d="M8 5h3v3h-3zM12 5h3v3h-3zM16 5h3v3h-3zM8 9h3v3h-3zM12 9h3v3h-3zM16 9h3v3h-3zM8 13h3v3h-3zM12 13h3v3h-3zM16 13h3v3h-3zM29 5h11v7h-11zM29 13h3v3h-3zM33 13h3v3h-3zM37 13h3v3h-3z" />
        <path d="M50 5h11v11h-11z" fill="#666" />
      </svg>
    </div>
  );
}

const TaskApp = ({ w, run = true, active = false, children }: { w: number; run?: boolean; active?: boolean; children: ReactNode }) => (
  <div className={"flex h-10 flex-col items-center " + (active ? "bg-[#4b5a68]" : "")} style={{ width: w }}>
    <svg width={40} height={37} viewBox="-20 -20 40 37" fill="none" className="block">{children}</svg>
    {run && <span className={"h-[3px] bg-[#76b9ed] " + (active ? "w-full" : "w-10")} />}
  </div>
);

function Taskbar() {
  return (
    <footer className="flex h-10 bg-linear-to-r from-[#21363e] via-[#1f3342] to-[#1a2442] text-white">
      <svg width={48} height={40}><path fill="#fff" d="M16 14l7-1v6.500h-7zM24 12.800l8-1v7.700h-8zM16 20.500h7v6.500l-7-1zM24 20.500h8v7.800l-8-1.100z" /></svg>
      <div className="flex w-[344px] items-center border border-[#cfcfcf] bg-[#f2f2f2] text-[15px] text-[#3a3a3a]">
        <svg width={39} height={38} fill="none" stroke="#222" strokeWidth={1.300}><circle cx={21.500} cy={16.500} r={5.500} /><path d="M17.500 20.500l-6 6" /></svg>
        <Fit w={128}>Type here to search</Fit>
      </div>
      <TaskApp w={48} run={false}><circle cx={0} cy={0} r={7} stroke="#fff" strokeWidth={2} /></TaskApp>
      <TaskApp w={48} run={false}><path d="M-7 -8v3h9v-3M-7 7v-3h9v3M-7 -2.500h9v4h-9zM6.500 -8v3M6.500 0v7" stroke="#fff" strokeWidth={1.200} /><path d="M5.500 -4h2v3h-2z" fill="#fff" /></TaskApp>
      <TaskApp w={53} run={false}><circle cx={0} cy={-1} r={10} fill="#78b746" /><path d="M-3.500 2v-6a3.500 3.500 0 0 1 7 0v6z" fill="#5b6b62" /><path d="M-1 0l-5 10M1 0l5 10" stroke="#e8eef0" strokeWidth={2.200} /><path d="M-5 3q5 4 10 0" stroke="#dfe6e8" strokeWidth={1.200} /><circle cx={0} cy={-4} r={1.300} fill="#a9b5b0" /></TaskApp>
      <TaskApp w={48} run={false}><path d="M-10 -1C-9 -13 10 -14 9 2H-4C-3 8 4 8 8 5V9C1 13-8 11-8 3-8-1-5-4-2-5L-4-2H4C4-8-6-8-10-1z" fill="#0d7fe0" /></TaskApp>
      <TaskApp w={48}><path d="M-11 -10h9l2 3h11v17h-22z" fill="#f4b92f" /><path d="M-11 -5h22v14h-22z" fill="#ffda6b" /><path d="M-7 10v-7q0-2 2-2h10q2 0 2 2v7h-4v-5h-6v5z" fill="#3d96dc" /></TaskApp>
      <TaskApp w={48} run={false}><path d="M-4 -6v-3q0-2 2-2h4q2 0 2 2v3" stroke="#fff" strokeWidth={1.500} /><path d="M-11 -6h23v15q0 2-2 2h-19q-2 0-2-2z" fill="#fff" /><path d="M-5 -3h5v5h-5z" fill="#f25022" /><path d="M1 -3h5v5h-5z" fill="#7fba00" /><path d="M-5 3h5v5h-5z" fill="#00a4ef" /><path d="M1 3h5v5h-5z" fill="#ffb900" /></TaskApp>
      <TaskApp w={52}><path d="M-6 -11h18v6h-18z" fill="#41a5ee" /><path d="M-6 -5h18v5h-18z" fill="#2b7cd3" /><path d="M-6 0h18v5h-18z" fill="#185abd" /><path d="M-6 5h18v6h-18z" fill="#103f91" /><path d="M-12 -6h13v13h-13z" fill="#185abd" /><text x={-10} y={4} fontSize={9} fontWeight={700} fill="#fff">W</text></TaskApp>
      <TaskApp w={46}><path d="M-11 -11h22v22h-22z" fill="#21d789" /><path d="M0 -11h11v15z" fill="#e8f24a" /><path d="M-11 11v-12l12 12z" fill="#35c7e0" /><path d="M5 11l6-10v10z" fill="#f3ee3f" /><path d="M-7 -7h14v14h-14z" fill="#000" /><text x={-6} y={1} fontSize={8} fontWeight={700} fill="#fff">PC</text><path d="M-6 5h5" stroke="#fff" strokeWidth={1.200} /></TaskApp>
      <TaskApp w={51}><circle cx={0} cy={0} r={11} fill="#fbc116" /><path d="M-9.500 -5.500A11 11 0 0 1 9.500 -5.500H0L-4 2z" fill="#e33b2e" /><path d="M-9.500 -5.500A11 11 0 0 0 0 11L4.500 2.500L-4.500 2.500z" fill="#2ba24c" /><circle cx={0} cy={0} r={5} fill="#fff" /><circle cx={0} cy={0} r={4} fill="#3f83f0" /></TaskApp>
      <TaskApp w={48} active>
        <path d="M-11 -11h22v22h-22z" fill="#fff" />
        {[[0, 0, 3], [0, -8, 2], [0, 7, 2], [-8, 0, 2], [7, 0, 2], [-5, -5, 2], [4, -5, 2], [-5, 4, 2], [4, 4, 2]].map(([x, y, s]) => <Plus key={`${x},${y}`} x={x + 0.5} y={y + 0.5} s={s - 0.5} c="#4d8ab5" w={1} />)}
      </TaskApp>
      <TaskApp w={50}><path d="M-6 -11h9v8h-9z" fill="#21a366" /><path d="M3 -11h9v8h-9z" fill="#33c481" /><path d="M-6 -3h18v7h-18z" fill="#107c41" /><path d="M-6 4h18v7h-18z" fill="#185c37" /><path d="M-12 -6h13v13h-13z" fill="#107c41" /><text x={-9} y={4} fontSize={9} fontWeight={700} fill="#fff">X</text></TaskApp>
      <TaskApp w={50}><ellipse cx={-1} cy={-3} rx={11} ry={7} transform="rotate(-25)" fill="#f2f2f2" stroke="#d94a4a" strokeWidth={1.500} /><path d="M-8 2L8 -8M-2 -8l3 12" stroke="#999" /><path d="M0 2l6 4M5 1l-2 6" stroke="#1d7fc4" strokeWidth={2} /><circle cx={1} cy={9} r={2} stroke="#1d7fc4" strokeWidth={2} /><circle cx={8} cy={7} r={2} stroke="#1d7fc4" strokeWidth={2} /></TaskApp>
      <svg width={120} height={40} className="ml-auto" fill="none" stroke="#fff" strokeWidth={1.300}>
        <path d="M5 23l6-6 6 6" />
        <path d="M38 26a12 12 0 0 1 12-12M41 26a9 9 0 0 1 9-9M44 26a6 6 0 0 1 6-6M47 26a3 3 0 0 1 3-3" />
        <path d="M71 17h12v8h-12v-4M83.500 19v4M68 13v3M71 13v3M67 16h5v3h-5zM69 19v6h2" /><path d="M75 19h6v4h-6z" fill="#fff" />
        <path d="M99 18h3l4-4v12l-4-4h-3zM109 17l5 5M114 17l-5 5" />
      </svg>
      <div className="flex w-[70px] flex-col items-center pt-[2px] text-[12px] leading-[18px]"><Fit w={43}>9:39 PM</Fit><Fit w={53}>4/11/2020</Fit></div>
      <svg width={50} height={40} fill="none" stroke="#fff" strokeWidth={1.300}><path d="M9.500 12h15v13h-5l-2.500 3.500-2.500-3.500h-5z" /><path d="M46.500 0v40" stroke="#6a7488" strokeWidth={1} /></svg>
    </footer>
  );
}

export default function App() {
  return (
    <div className="relative flex h-[768px] w-[1366px] flex-col overflow-hidden bg-white [font-family:'Open_Sans',sans-serif]">
      <TitleBar />
      <Toolbar />
      <div className="flex h-[593px] shrink-0 overflow-hidden">
        <SidePanel />
        <Canvas />
      </div>
      <ShowMe />
      <SheetTabs />
      <StatusBar />
      <Taskbar />
    </div>
  );
}
